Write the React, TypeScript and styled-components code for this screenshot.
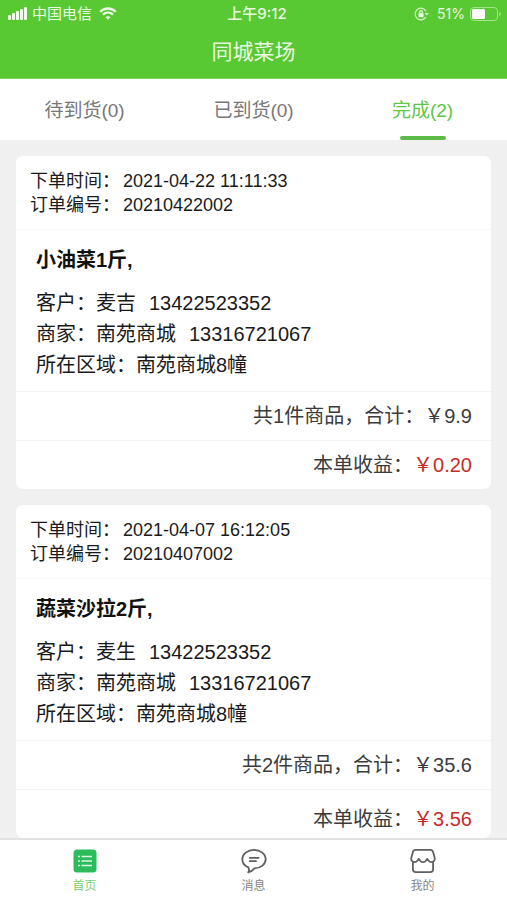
import React, { useState } from "react";
import styled, { createGlobalStyle, css } from "styled-components";

const GlobalStyle = createGlobalStyle`
  * { box-sizing: border-box; }
  body {
    margin: 0;
    background: #f0f0f0;
    font-family: "Liberation Sans", "Noto Sans CJK SC", sans-serif;
  }
  button { font-family: inherit; }
`;

const Page = styled.div`
  display: flex;
  flex-direction: column;
  height: 100vh;
`;

const Header = styled.header`
  flex: none;
  background: #58c833;
  color: #e9f9e0;
  padding-bottom: 11px;
  border-bottom: 1px solid #7dd65e;
`;

const StatusBar = styled.div`
  display: grid;
  grid-template-columns: 1fr auto 1fr;
  align-items: center;
  height: 27px;
  padding: 0 5px 0 8px;
  font-size: 15px;
  line-height: 20px;
`;

const StatusGroup = styled.div<{ $end?: boolean }>`
  display: flex;
  align-items: center;
  gap: ${(p) => (p.$end ? 5 : 4)}px;
  justify-content: ${(p) => (p.$end ? "flex-end" : "flex-start")};

  svg { flex: none; }
`;

const Carrier = styled.span`
  margin-right: 3px;
`;

const Clock = styled.time`
  font-family: Inter, "Noto Sans CJK SC", sans-serif;
  font-size: 15px;
  font-weight: 500;
  padding-left: 4px;
`;

const Percent = styled.span`
  font-family: Inter, sans-serif;
  font-size: 14px;
  margin-left: 3px;
`;

const Title = styled.h1`
  margin: 10px 0 0;
  text-align: center;
  font-size: 21px;
  font-weight: 400;
  line-height: 30px;
`;

const Tabs = styled.div`
  flex: none;
  display: grid;
  grid-template-columns: repeat(3, 1fr);
  height: 61px;
  background: #fff;
`;

const TabButton = styled.button<{ $active: boolean }>`
  display: flex;
  flex-direction: column;
  align-items: center;
  border: 0;
  padding: 7px 0 0;
  background: none;
  font-size: 19px;
  line-height: 50px;
  cursor: pointer;
  color: ${(p) => (p.$active ? "#60c645" : "#777")};

  &::after {
    content: "";
    width: 46px;
    height: 4px;
    border-radius: 2px;
    background: ${(p) => (p.$active ? "#5cbb45" : "transparent")};
  }
`;

const OrderList = styled.main`
  flex: 1;
  min-height: 0;
  overflow-y: auto;
  scrollbar-width: none;
  display: flex;
  flex-direction: column;
  gap: 16px;
  padding: 16px 16px 0;
`;

const Card = styled.article`
  flex: none;
  background: #fff;
  border-radius: 7px;
  color: #1a1a1a;
`;

const CardHead = styled.div`
  padding: 13px 14px 12px;
  border-bottom: 1px solid #f8f8f8;
  font-size: 18px;
  line-height: 24px;
`;

const HeadLine = styled.div`
  display: flex;
  gap: 3px;
`;

const CardBody = styled.div`
  padding: 15px 20px 10px;
  font-size: 20px;
  line-height: 31px;
`;

const Product = styled.h2`
  margin: 0 0 13px;
  font-size: 20px;
  line-height: 30px;
  color: #111;
`;

const Phone = styled.span`
  margin-left: 13px;
`;

const SumRow = styled.div<{ $roomy?: boolean }>`
  display: flex;
  justify-content: flex-end;
  padding: 9px 19px;
  border-top: 1px solid #f3f3f3;
  font-size: 20px;
  line-height: 30px;
  color: #3c3c3c;
  ${(p) =>
    p.$roomy &&
    css`
      padding-top: 14px;
      padding-bottom: 4px;
    `}
`;

const Income = styled.span`
  color: #c92a27;
`;

const NavBar = styled.nav`
  flex: none;
  display: grid;
  grid-template-columns: repeat(3, 1fr);
  height: 62px;
  background: #fff;
  border-top: 2px solid #e2e2e2;
`;

const NavButton = styled.button<{ $active: boolean }>`
  display: flex;
  flex-direction: column;
  align-items: center;
  gap: 3px;
  border: 0;
  padding: 8px 0 0;
  background: none;
  font-size: 12px;
  line-height: 18px;
  cursor: pointer;
  color: ${(p) => (p.$active ? "#7dcf6d" : "#858585")};
`;

const SignalIcon = () => (
  <svg width="20" height="13" viewBox="0 0 20 13" fill="#f0fbe9" aria-hidden="true">
    <rect x="0" y="8" width="3" height="5" rx="1" />
    <rect x="4" y="6" width="3" height="7" rx="1" />
    <rect x="8" y="4" width="3" height="9" rx="1" />
    <rect x="12" y="2" width="3" height="11" rx="1" />
    <rect x="16" y="0" width="3" height="13" rx="1" />
  </svg>
);

const WifiIcon = () => (
  <svg width="18" height="13" viewBox="0 0 18 13" fill="none" stroke="#f0fbe9" strokeWidth="2.3" aria-hidden="true">
    <path d="M1.2 4.7C5.6.4 12.4.4 16.8 4.7" />
    <path d="M4 7.7c2.9-2.7 7.1-2.7 10 0" />
    <path d="M6.5 10.2c1.5-1.3 3.5-1.3 5 0L9 12.8z" fill="#f0fbe9" stroke="none" />
  </svg>
);

const LockIcon = () => (
  <svg width="15" height="14" viewBox="0 0 15 14" fill="none" stroke="#d9f4cc" strokeWidth="1.2" aria-hidden="true">
    <path d="M12 4.2A5.8 5.8 0 1 0 11.8 10.2" />
    <path d="M10.7 6h4l-2 2.6z" fill="#d9f4cc" stroke="none" />
    <rect x="4.5" y="6.2" width="5" height="4" fill="#f0fbe9" stroke="none" />
    <path d="M5.6 6.5V5a1.4 1.4 0 0 1 2.8 0v1.5" />
  </svg>
);

const BatteryIcon = () => (
  <svg width="32" height="14" viewBox="0 0 32 14" aria-hidden="true">
    <rect x=".5" y=".5" width="27" height="13" rx="3.5" fill="none" stroke="#a5e38d" />
    <rect x="2" y="2" width="13" height="10" rx="1.5" fill="#fff" />
    <path d="M29.3 5v4c1.3-.5 1.8-1.2 1.8-2s-.5-1.5-1.8-2z" fill="#a5e38d" />
  </svg>
);

const HomeIcon = () => (
  <svg width="26" height="26" viewBox="0 0 26 26" aria-hidden="true">
    <rect x="1.5" y="1.5" width="23" height="23" rx="3.5" fill="#2dbc5c" />
    <g stroke="#d9f6e2" strokeWidth="1.7">
      <path d="M6 8.5h2M9.5 8.5h10.5M6 13h2M9.5 13h10.5M6 17.5h2M9.5 17.5h10.5" />
    </g>
  </svg>
);

const MessageIcon = () => (
  <svg width="26" height="26" viewBox="0 0 26 26" fill="none" stroke="#606060" strokeWidth="1.8" strokeLinejoin="round" strokeLinecap="round" aria-hidden="true">
    <path d="M7.4 19.3C3.7 17.8 1.3 14.8 1.3 11.2 1.3 6 6.5 1.9 13 1.9s11.7 4.1 11.7 9.3c0 5-4.9 9-11.2 9.2-1.6 1.9-3.5 3.3-6.3 4 .9-1.5 1-3.4.2-5.1z" />
    <path d="M8.7 9.8h9M8.7 13.2h6.3" />
  </svg>
);

const ShopIcon = () => (
  <svg width="26" height="26" viewBox="0 0 26 26" fill="none" stroke="#606060" strokeWidth="1.8" strokeLinejoin="round" strokeLinecap="round" aria-hidden="true">
    <path d="M5.5 1.9h15c1.5 0 2.2.8 2.6 2.2l1.5 5.3c.7 2.6-.7 4.7-3 4.7-2 0-3.3-1.2-4.4-3.2-1 2-2.4 3.2-4.2 3.2s-3.2-1.2-4.2-3.2c-1.1 2-2.4 3.2-4.4 3.2-2.3 0-3.7-2.1-3-4.700l1.500-5.300C3.300 2.700 4 1.900 5.500 1.900z" />
    <path d="M2.900 14.500v6.700c0 1.900 1 2.900 2.900 2.900h14.400c1.900 0 2.900-1 2.900-2.900v-6.700" />
  </svg>
);

const tabs = ["待到货(0)", "已到货(0)", "完成(2)"];

const orders = [
  { time: "2021-04-22 11:11:33", no: "20210422002", product: "小油菜1斤,", customer: "麦吉", count: 1, total: "9.9", income: "0.20" },
  { time: "2021-04-07 16:12:05", no: "20210407002", product: "蔬菜沙拉2斤,", customer: "麦生", count: 2, total: "35.6", income: "3.56" },
];

const navItems = [
  { label: "首页", Icon: HomeIcon },
  { label: "消息", Icon: MessageIcon },
  { label: "我的", Icon: ShopIcon },
];

export default function App() {
  const [tab, setTab] = useState(2);
  const [nav, setNav] = useState(0);

  return (
    <Page>
      <GlobalStyle />
      <Header>
        <StatusBar>
          <StatusGroup>
            <SignalIcon />
            <Carrier>中国电信</Carrier>
            <WifiIcon />
          </StatusGroup>
          <Clock>上午9:12</Clock>
          <StatusGroup $end>
            <LockIcon />
            <Percent>51%</Percent>
            <BatteryIcon />
          </StatusGroup>
        </StatusBar>
        <Title>同城菜场</Title>
      </Header>
      <Tabs role="tablist">
        {tabs.map((label, i) => (
          <TabButton key={label} type="button" role="tab" aria-selected={i === tab} $active={i === tab} onClick={() => setTab(i)}>
            {label}
          </TabButton>
        ))}
      </Tabs>
      <OrderList>
        {orders.map((o, i) => (
          <Card key={o.no}>
            <CardHead>
              <HeadLine><span>下单时间：</span><span>{o.time}</span></HeadLine>
              <HeadLine><span>订单编号：</span><span>{o.no}</span></HeadLine>
            </CardHead>
            <CardBody>
              <Product>{o.product}</Product>
              <div>客户：{o.customer}<Phone>13422523352</Phone></div>
              <div>商家：南苑商城<Phone>13316721067</Phone></div>
              <div>所在区域：南苑商城8幢</div>
            </CardBody>
            <SumRow>共{o.count}件商品，合计：￥{o.total}</SumRow>
            <SumRow $roomy={i === orders.length - 1}>
              本单收益：<Income>￥{o.income}</Income>
            </SumRow>
          </Card>
        ))}
      </OrderList>
      <NavBar>
        {navItems.map(({ label, Icon }, i) => (
          <NavButton key={label} type="button" $active={i === nav} onClick={() => setNav(i)}>
            <Icon />
            {label}
          </NavButton>
        ))}
      </NavBar>
    </Page>
  );
}
